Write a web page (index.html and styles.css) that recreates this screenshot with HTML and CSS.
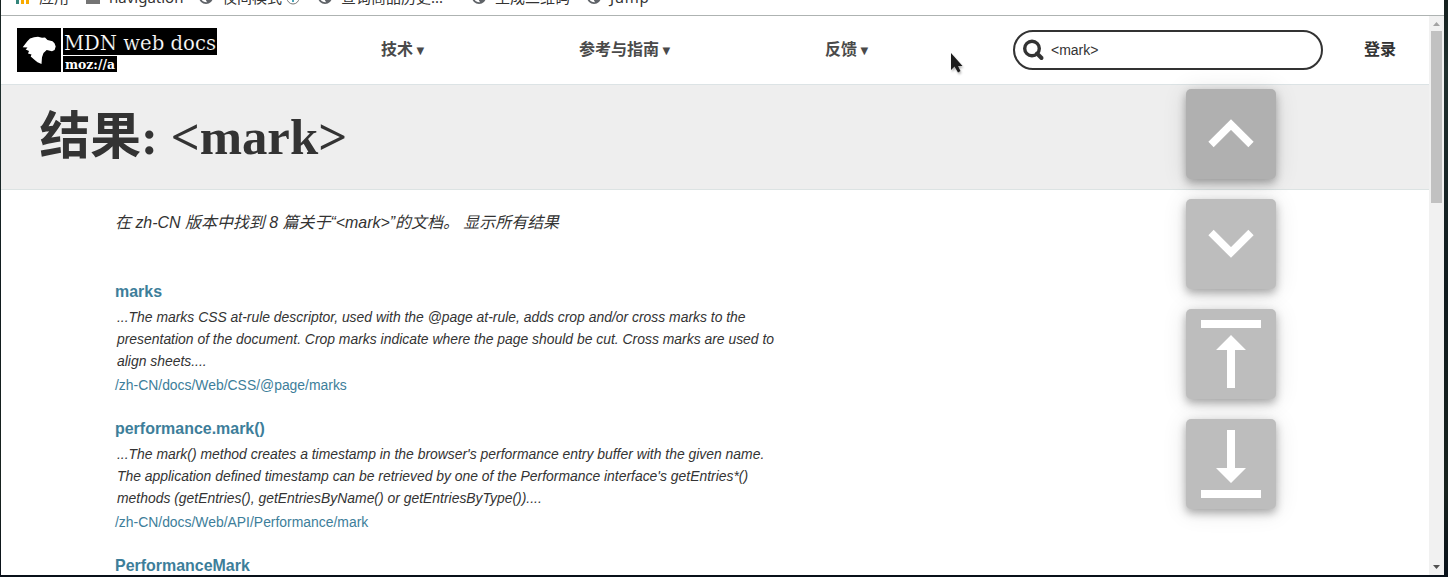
FILE: index.html
```html
<!DOCTYPE html>
<html lang="zh-CN">
<head>
<meta charset="utf-8">
<title>结果: &lt;mark&gt; | MDN</title>
<link rel="stylesheet" href="styles.css">
</head>
<body>
<svg class="defs" aria-hidden="true">
  <symbol id="globe" viewBox="0 0 14 14"><circle cx="7" cy="7" r="7" fill="#5f6368"/><path d="M6 2C10 1.500 12 4 12.300 7L11 9 7.500 8 6 6z" fill="#fff"/><path d="M2 7l4 1.500 2 3.700C4 12.500 2 10 2 7z" fill="#fff"/></symbol>
</svg>
<div class="window">
  <div class="bookmarks">
    <span class="bookmark"><svg width="14" height="14"><path d="M0 0h3v14H0z" fill="#34857b"/><path d="M5 0h3v14H5zM10 0h3v14h-3z" fill="#f9ab00"/></svg><span class="apps">应用</span></span>
    <span class="bookmark"><svg width="14" height="14"><path d="M0 1h6l2 2h6v11H0z" fill="#747474"/></svg>navigation</span>
    <span class="bookmark"><svg width="14" height="14"><use href="#globe"/></svg>夜间模式<svg class="info" width="14" height="14"><circle cx="7" cy="7" r="6" fill="none" stroke="#777"/><path d="M7 6v5" stroke="#4aa3b8" stroke-width="2"/></svg></span>
    <span class="bookmark"><svg width="14" height="14"><use href="#globe"/></svg>查询商品历史...</span>
    <span class="bookmark"><svg width="14" height="14"><use href="#globe"/></svg>生成二维码</span>
    <span class="bookmark"><svg width="14" height="14"><use href="#globe"/></svg>Jump</span>
  </div>
  <div class="viewport">
    <div class="page">
      <header class="header">
        <svg class="logo" width="200" height="44" viewBox="0 0 200 44">
          <path d="M0 0h44v44H0zM46 0h154v27H46zM46 28h54v16H46z"/>
          <path d="M5.700 19.300L10.300 13.300 13 10.500 17 9.300 21 8.800 25 9.800 28 9.500 30.500 12 35.500 13.300 37.500 15.300 38.700 18.500 37.600 22 35 23.200 29.700 22 26.500 25 25 29.300 24.500 36 20.500 34.300 17.700 32 13.700 28.500 14.500 26.500 11 25.500 12 23 8.700 21.500 10.500 19.500z" fill="#fff"/>
          <text x="47" y="22" class="logo-name" textLength="152" lengthAdjust="spacingAndGlyphs">MDN web docs</text>
          <text x="48" y="41" class="logo-org" textLength="50" lengthAdjust="spacingAndGlyphs">moz://a</text>
        </svg>
        <nav class="menu">
          <a>技术 <small>▼</small></a>
          <a>参考与指南 <small>▼</small></a>
          <a>反馈 <small>▼</small></a>
        </nav>
        <div class="search">
          <svg width="22" height="22" viewBox="0 0 22 22" fill="none" stroke="#333"><circle cx="9" cy="9.500" r="7.300" stroke-width="3.400"/><path d="M14 14.500l4.500 4.500" stroke-width="4" stroke-linecap="round"/></svg>
          <span>&lt;mark&gt;</span>
        </div>
        <a class="login">登录</a>
      </header>
      <div class="title-band"><h1>结果: &lt;mark&gt;</h1></div>
      <main class="results">
        <p class="summary">在 zh-CN 版本中找到 8 篇关于“&lt;mark&gt;”的文档。 显示所有结果</p>
        <article class="result">
          <h2>marks</h2>
          <p>...The marks CSS at-rule descriptor, used with the @page at-rule, adds crop and/or cross marks to the<br>presentation of the document. Crop marks indicate where the page should be cut. Cross marks are used to<br>align sheets....</p>
          <a>/zh-CN/docs/Web/CSS/@page/marks</a>
        </article>
        <article class="result">
          <h2>performance.mark()</h2>
          <p>...The mark() method creates a timestamp in the browser's performance entry buffer with the given name.<br>The application defined timestamp can be retrieved by one of the Performance interface's getEntries*()<br>methods (getEntries(), getEntriesByName() or getEntriesByType())....</p>
          <a>/zh-CN/docs/Web/API/Performance/mark</a>
        </article>
        <article class="result"><h2>PerformanceMark</h2></article>
      </main>
    </div>
    <div class="scrollbar">
      <svg width="15" height="15"><path d="M4 10h7L7.500 6z" fill="#a3a3a3"/></svg>
      <div class="thumb"></div>
      <svg class="down" width="15" height="15"><path d="M4 5h7L7.500 9z" fill="#505050"/></svg>
    </div>
  </div>
  <div class="scroll-tools">
    <button><svg width="90" height="90"><path d="M25 55.500L45 35.500 65 55.500" class="chevron"/></svg></button>
    <button><svg width="90" height="90"><path d="M25 33.500L45 53.500 65 33.500" class="chevron"/></svg></button>
    <button><svg width="90" height="90"><path d="M15 11h60v8H15zM45 26l15 15H49v38h-8V41H30z" fill="#fff"/></svg></button>
    <button><svg width="90" height="90"><path d="M15 71h60v8H15zM45 64l15-15H49V11h-8v38H30z" fill="#fff"/></svg></button>
  </div>
  <svg class="cursor" width="16" height="24"><path d="M2 1v17l3.500-3.500 3.500 6 2.500-1.500-2.500-5h4.500z" fill="#1c1c1c"/></svg>
</div>
</body>
</html>
```
FILE: styles.css
```css
* { box-sizing: border-box; }
body {
  margin: 0;
  height: 577px;
  overflow: hidden;
  padding: 0 4px 2px 1px;
  background: linear-gradient(#15201f, #20302e 12%, #101b1e 50%, #18231f 85%, #081019);
  font-family: "Liberation Sans", "Noto Sans CJK SC", sans-serif;
  color: #333;
}
.defs { position: absolute; width: 0; height: 0; }
.window {
  position: relative;
  display: flex;
  flex-direction: column;
  width: 1443px;
  height: 575px;
  overflow: hidden;
  background: #fff;
}
.bookmarks {
  display: grid;
  grid-template-columns: 70px 113px 119px 154px 115px 1fr;
  align-items: start;
  height: 16px;
  overflow: hidden;
  padding-left: 15px;
  border-bottom: 1px solid #aeb3b2;
  font: 15px/24px "Noto Sans", "Noto Sans CJK SC", sans-serif;
  color: #333;
}
.bookmark { display: flex; align-items: center; gap: 9px; height: 24px; margin-top: -15px; white-space: nowrap; }
.bookmark > svg { flex: none; margin-top: -1px; }
.bookmark .info { margin: 2px 0 0 -5px; }
.bookmark:last-child { letter-spacing: .7px; }
.viewport { display: flex; height: 559px; }
.page { width: 1428px; }
.header {
  display: flex;
  align-items: center;
  height: 69px;
  padding-left: 16px;
  border-bottom: 1px solid #dce3e5;
}
.menu {
  display: grid;
  grid-template-columns: 198px 246px 188px;
  margin-left: 164px;
  font-size: 16px;
  font-weight: bold;
  line-height: 24px;
  color: #4a4a4a;
}
.menu small { font: 10px "DejaVu Sans", sans-serif; margin-left: -1px; vertical-align: 1px; }
.search {
  display: flex;
  align-items: center;
  gap: 6px;
  width: 310px;
  height: 40px;
  padding-left: 8px;
  border: 2px solid #333;
  border-radius: 20px;
  font-size: 14px;
}
.login { margin-left: 41px; font-size: 16px; font-weight: bold; line-height: 24px; }
.logo-name { font: 21px "DejaVu Serif", serif; fill: #fff; stroke: #000; stroke-width: .2px; }
.logo-org { font: bold 13px "DejaVu Serif", serif; fill: #fff; }
.title-band {
  height: 105px;
  padding: 16px 0 0 38.500px;
  background: #eee;
  border-bottom: 1px solid #dce3e3;
}
h1 {
  margin: 0;
  font: bold 50.800px/73px "Liberation Serif", "Noto Sans CJK SC", serif;
}
.results { padding: 21px 0 0 114px; }
.summary { margin: 0 0 45px; font-size: 15.960px; line-height: 24px; font-style: italic; }
.result { height: 137px; color: #3d7e9a; font-size: 13.910px; line-height: 22px; }
.result h2 { margin: 0; font-size: 15.960px; line-height: 24px; }
.result p { margin: 2px 0 2px 2px; color: #333; font-style: italic; white-space: nowrap; }
.scrollbar { display: flex; flex-direction: column; width: 15px; background: #f1f1f1; }
.scrollbar svg { display: block; flex: none; }
.scrollbar .down { margin-top: auto; }
.thumb { width: 11px; height: 172px; margin-left: 2px; background: #c1c1c1; }
.scroll-tools {
  position: absolute;
  left: 1185px;
  top: 89px;
  display: grid;
  gap: 20px;
}
.scroll-tools button {
  width: 90px;
  height: 90px;
  padding: 0;
  border: 0;
  border-radius: 5px;
  background: #bdbdbd;
  box-shadow: 0 4px 8px rgba(0, 0, 0, .3), 0 2px 24px rgba(0, 0, 0, .12);
}
.scroll-tools button:first-child { background: #b0b0b0; }
.scroll-tools svg { display: block; }
.chevron { fill: none; stroke: #fff; stroke-width: 7.500px; }
.cursor { position: absolute; left: 948px; top: 52px; filter: drop-shadow(1px 2px 1px rgba(0, 0, 0, .3)); }
```
